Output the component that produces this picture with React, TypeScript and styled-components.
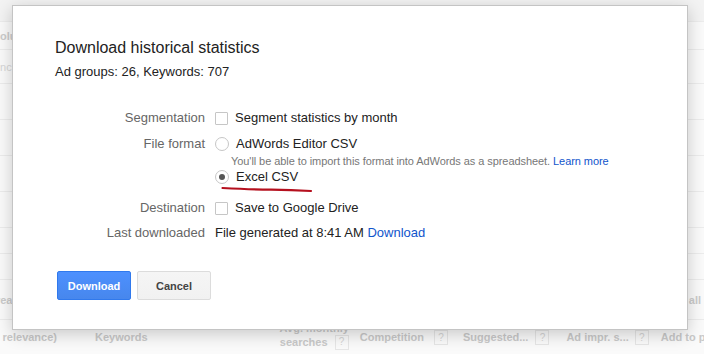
import React from 'react';
import styled, { createGlobalStyle } from 'styled-components';

const GlobalStyle = createGlobalStyle`
  html, body {
    margin: 0;
    padding: 0;
    width: 704px;
    height: 354px;
    overflow: hidden;
    font-family: 'Liberation Sans', Arial, sans-serif;
  }
`;

const Page = styled.div`
  position: relative;
  width: 704px;
  height: 354px;
  overflow: hidden;
  background: #fafafa;
`;

const BgRow = styled.div<{ $h: number; $top?: boolean }>`
  display: flex;
  justify-content: space-between;
  align-items: center;
  height: ${({ $h }) => $h}px;
  box-sizing: border-box;
  border-bottom: 1px solid #ececec;
  background: ${({ $top }) => ($top ? '#f3f3f3' : 'transparent')};
  font-size: 11px;
  white-space: nowrap;
  overflow: hidden;
`;

const BgText = styled.span<{ $indent: number; $light?: boolean }>`
  margin-left: ${({ $indent }) => $indent}px;
  font-weight: ${({ $light }) => ($light ? 'normal' : 'bold')};
  color: ${({ $light }) => ($light ? '#d6d6d6' : '#cbcbcb')};
`;

const BgRight = styled.span`
  margin-right: 3px;
  font-weight: bold;
  color: #cbcbcb;
`;

const HeaderRow = styled.div`
  display: flex;
  align-items: center;
  height: 34px;
  font-size: 11px;
  font-weight: bold;
  color: #c9c9c9;
  white-space: nowrap;

  & > * {
    flex-shrink: 0;
  }
`;

const FirstHead = styled.div`
  display: flex;
  justify-content: flex-end;
  width: 57px;
  overflow: hidden;
`;

const HeadCell = styled.div<{ $ml: number; $gap?: number }>`
  display: flex;
  align-items: center;
  gap: ${({ $gap }) => $gap ?? 8}px;
  margin-left: ${({ $ml }) => $ml}px;
`;

const TwoLine = styled.div`
  display: flex;
  flex-direction: column;
  align-items: center;
  line-height: 14px;
  margin-top: -4px;
`;

const SecondLine = styled.span`
  display: flex;
  align-items: center;
  gap: 7px;
`;

const HelpBox = styled.span`
  display: inline-flex;
  align-items: center;
  justify-content: center;
  width: 12px;
  height: 13px;
  border: 1px solid #e6e6e6;
  font-size: 10px;
  font-weight: normal;
  color: #d4d4d4;
`;

const Dialog = styled.div`
  position: absolute;
  left: 12px;
  top: 5px;
  width: 676px;
  box-sizing: border-box;
  padding: 32px 42px 29px;
  background: #fff;
  border: 1px solid #c4c4c4;
  box-shadow: 0 4px 16px rgba(0, 0, 0, 0.2);
  color: #222;
`;

const Title = styled.div`
  font-size: 16px;
  line-height: 20px;
`;

const Subtitle = styled.div`
  margin-top: 6px;
  font-size: 13px;
  line-height: 16px;
`;

const Form = styled.div`
  display: flex;
  flex-direction: column;
  margin-top: 30px;
`;

const Row = styled.div<{ $gap: number }>`
  display: flex;
  align-items: flex-start;
  margin-bottom: ${({ $gap }) => $gap}px;
  font-size: 13px;
  line-height: 16px;
`;

const Label = styled.div`
  width: 150px;
  text-align: right;
  color: #666;
`;

const Value = styled.div`
  display: flex;
  flex-direction: column;
  margin-left: 10px;
`;

const Option = styled.label`
  position: relative;
  display: flex;
  align-items: center;
  gap: 7px;
  height: 16px;
  color: #222;
`;

const Checkbox = styled.span`
  width: 13px;
  height: 13px;
  box-sizing: border-box;
  border: 1px solid #c6c6c6;
  border-radius: 1px;
  background: #fff;
`;

const Radio = styled.span<{ $checked?: boolean }>`
  display: flex;
  align-items: center;
  justify-content: center;
  width: 14px;
  height: 14px;
  box-sizing: border-box;
  border: 1px solid #c6c6c6;
  border-radius: 50%;
  background: #fff;

  &::after {
    content: '';
    display: ${({ $checked }) => ($checked ? 'block' : 'none')};
    width: 6px;
    height: 6px;
    border-radius: 50%;
    background: #555;
  }
`;

const Help = styled.div`
  margin: 2px 0 1px 16px;
  font-size: 11px;
  line-height: 14px;
  letter-spacing: -0.07px;
  color: #777;
`;

const Link = styled.a`
  color: #15c;
  text-decoration: none;
`;

const Scribble = styled.svg`
  position: absolute;
  left: 6px;
  top: 17px;
`;

const Buttons = styled.div`
  display: flex;
  gap: 6px;
  margin: 30px 0 0 2px;
`;

const Button = styled.button<{ $primary?: boolean }>`
  width: 74px;
  height: 29px;
  box-sizing: border-box;
  padding: 0 8px;
  border-radius: 2px;
  font-family: 'Liberation Sans', Arial, sans-serif;
  font-size: 11px;
  font-weight: bold;
  color: ${({ $primary }) => ($primary ? '#fff' : '#444')};
  border: 1px solid ${({ $primary }) => ($primary ? '#3079ed' : '#dcdcdc')};
  background: ${({ $primary }) =>
    $primary
      ? 'linear-gradient(#4d90fe, #4787ed)'
      : 'linear-gradient(#f5f5f5, #f1f1f1)'};
`;

const bgRows = [
  { h: 22, top: true },
  { h: 28, text: 'Column', indent: -8 },
  { h: 34, text: 'Inc', indent: -3, light: true },
  { h: 36 },
  { h: 36 },
  { h: 36 },
  { h: 36 },
  { h: 26 },
  { h: 26 },
  { h: 40, text: 'Increase', indent: -20, right: 'Add all' },
];

const App: React.FC = () => (
  <>
    <GlobalStyle />
    <Page>
      {bgRows.map((r, i) => (
        <BgRow key={i} $h={r.h} $top={r.top}>
          {r.text ? (
            <BgText $indent={r.indent || 0} $light={r.light}>
              {r.text}
            </BgText>
          ) : (
            <span />
          )}
          {r.right && <BgRight>{r.right}</BgRight>}
        </BgRow>
      ))}
      <HeaderRow>
        <FirstHead>Keyword (by relevance)</FirstHead>
        <HeadCell $ml={38}>Keywords</HeadCell>
        <HeadCell $ml={132}>
          <TwoLine>
            <span>Avg. monthly</span>
            <SecondLine>
              searches <HelpBox>?</HelpBox>
            </SecondLine>
          </TwoLine>
        </HeadCell>
        <HeadCell $ml={11} $gap={10}>
          Competition <HelpBox>?</HelpBox>
        </HeadCell>
        <HeadCell $ml={15} $gap={7}>
          Suggested... <HelpBox>?</HelpBox>
        </HeadCell>
        <HeadCell $ml={17} $gap={6}>
          Ad impr. s... <HelpBox>?</HelpBox>
        </HeadCell>
        <HeadCell $ml={12}>Add to plan</HeadCell>
      </HeaderRow>

      <Dialog>
        <Title>Download historical statistics</Title>
        <Subtitle>Ad groups: 26, Keywords: 707</Subtitle>
        <Form>
          <Row $gap={10}>
            <Label>Segmentation</Label>
            <Value>
              <Option>
                <Checkbox />
                Segment statistics by month
              </Option>
            </Value>
          </Row>
          <Row $gap={15}>
            <Label>File format</Label>
            <Value>
              <Option>
                <Radio />
                AdWords Editor CSV
              </Option>
              <Help>
                You'll be able to import this format into AdWords as a spreadsheet.{' '}
                <Link href="#">Learn more</Link>
              </Help>
              <Option>
                <Radio $checked />
                Excel CSV
                <Scribble width="92" height="7" viewBox="0 0 92 7">
                  <path
                    d="M1.5 2 Q 30 3.5 50 3.6 T 90 5"
                    fill="none"
                    stroke="#b5101e"
                    strokeWidth="2.2"
                    strokeLinecap="round"
                  />
                </Scribble>
              </Option>
            </Value>
          </Row>
          <Row $gap={9}>
            <Label>Destination</Label>
            <Value>
              <Option>
                <Checkbox />
                Save to Google Drive
              </Option>
            </Value>
          </Row>
          <Row $gap={0}>
            <Label>Last downloaded</Label>
            <Value>
              <span>
                File generated at 8:41 AM <Link href="#">Download</Link>
              </span>
            </Value>
          </Row>
        </Form>
        <Buttons>
          <Button $primary>Download</Button>
          <Button>Cancel</Button>
        </Buttons>
      </Dialog>
    </Page>
  </>
);

export default App;
